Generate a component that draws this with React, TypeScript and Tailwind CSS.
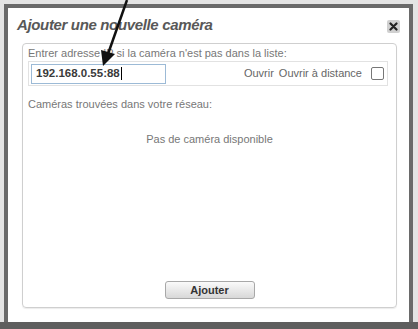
import React from "react";

export default function App() {
  const font = { fontFamily: '"Liberation Sans", Arial, sans-serif' };
  return (
    <div className="relative w-[418px] h-[329px] overflow-hidden bg-[#e4e4e4]" style={font}>
      <div className="absolute left-0 top-[322px] w-[418px] h-[7px] bg-[#5e5e5e]" />
      <div className="ml-[4px] mt-[4px] w-[409px] h-[325px] border-[4px] border-b-0 border-[#6a6a6a] bg-[#f4f4f4] flex flex-col">
        <div className="bg-white flex flex-col h-[314px] rounded-t-[2px]">
          <div className="h-[35px] flex items-start justify-between pl-[9px] pr-[9px]">
            <div className="mt-[7px] text-[15px] leading-[20px] font-bold italic text-[#585858] tracking-[-0.35px]">
              Ajouter une nouvelle caméra
            </div>
            <div className="mt-[12px] w-[13px] h-[13px] rounded-[2px] bg-[#d0d0d0] flex items-center justify-center">
              <svg width="9" height="9" viewBox="0 0 9 9">
                <path d="M1.5 1.5 L7.5 7.5 M7.5 1.5 L1.5 7.5" stroke="#222" strokeWidth="2.2" strokeLinecap="round" />
              </svg>
            </div>
          </div>
          <div className="ml-[14px] mr-[12px] h-[265px] border border-[#cfcfcf] rounded-[4px] flex flex-col pt-[2px] pb-[8px] shadow-[0_1px_1px_rgba(0,0,0,0.08)]">
            <div className="pl-[5px] text-[11px] leading-[14px] text-[#777]">
              Entrer adresse IP si la caméra n'est pas dans la liste:
            </div>
            <div className="ml-[5px] mr-[8px] mt-[1px] h-[25px] border border-[#e2e2e2] flex items-center pl-[2px] pr-[3px]">
              <div className="w-[135px] h-[20px] border border-[#9cbad6] bg-white flex items-center pl-[4px] text-[11.5px] font-bold text-[#3a3a3a]">
                192.168.0.55:88<span className="inline-block w-[1px] h-[13px] bg-black ml-[1px]" />
              </div>
              <div className="flex-1" />
              <span className="text-[11px] text-[#666]">Ouvrir</span>
              <span className="ml-[5px] text-[11px] text-[#666]">Ouvrir à distance</span>
              <div className="ml-[9px] w-[13px] h-[13px] border border-[#777] rounded-[2px] bg-white" />
            </div>
            <div className="pl-[5px] mt-[11px] text-[11px] leading-[14px] text-[#777]">
              Caméras trouvées dans votre réseau:
            </div>
            <div className="mt-[21px] text-center text-[11px] leading-[14px] text-[#777]">
              Pas de caméra disponible
            </div>
            <div className="flex-1" />
            <div className="flex justify-center">
              <div className="w-[90px] h-[18px] border border-[#a8a8a8] rounded-[3px] bg-gradient-to-b from-[#fafafa] to-[#d8d8d8] flex items-center justify-center text-[11px] font-bold text-[#333]">
                Ajouter
              </div>
            </div>
          </div>
        </div>
      </div>
      <svg className="absolute left-0 top-0" width="418" height="329" viewBox="0 0 418 329">
        <line x1="127" y1="0" x2="108" y2="54" stroke="#111" strokeWidth="2.5" />
        <polygon points="103,66 101,50 115,54" fill="#111" />
      </svg>
    </div>
  );
}
